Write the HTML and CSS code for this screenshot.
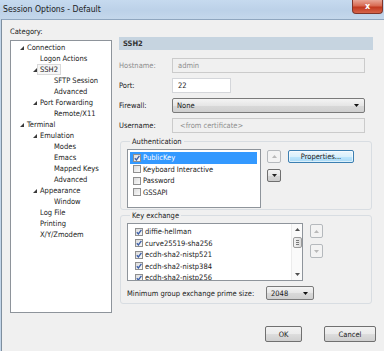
FILE: index.html
```html
<!DOCTYPE html>
<html lang="en">
<head>
    <meta charset="UTF-8">
    <title>Session Options - Default</title>
    <link rel="stylesheet" href="styles.css">
</head>
<body>
    <div class="window">
        <div class="titlebar">
            <span class="title">Session Options - Default</span>
            <span class="close">x</span>
        </div>

        <div class="client">
            <div class="main">
                <!-- Category tree -->
                <div class="category">
                    <div class="cat-label">Category:</div>
                    <ul class="tree">
                        <li class="node l0"><span class="tw"><svg width="4" height="4"><polygon points="0,4 4,4 4,0" /></svg></span><span class="txt">Connection</span></li>
                        <li class="node l1"><span class="tw"></span><span class="txt">Logon Actions</span></li>
                        <li class="node l1"><span class="tw"><svg width="4" height="4"><polygon points="0,4 4,4 4,0" /></svg></span><span class="txt selected">SSH2</span></li>
                        <li class="node l2"><span class="tw"></span><span class="txt">SFTP Session</span></li>
                        <li class="node l2"><span class="tw"></span><span class="txt">Advanced</span></li>
                        <li class="node l1"><span class="tw"><svg width="4" height="4"><polygon points="0,4 4,4 4,0" /></svg></span><span class="txt">Port Forwarding</span></li>
                        <li class="node l2"><span class="tw"></span><span class="txt">Remote/X11</span></li>
                        <li class="node l0"><span class="tw"><svg width="4" height="4"><polygon points="0,4 4,4 4,0" /></svg></span><span class="txt">Terminal</span></li>
                        <li class="node l1"><span class="tw"><svg width="4" height="4"><polygon points="0,4 4,4 4,0" /></svg></span><span class="txt">Emulation</span></li>
                        <li class="node l2"><span class="tw"></span><span class="txt">Modes</span></li>
                        <li class="node l2"><span class="tw"></span><span class="txt">Emacs</span></li>
                        <li class="node l2"><span class="tw"></span><span class="txt">Mapped Keys</span></li>
                        <li class="node l2"><span class="tw"></span><span class="txt">Advanced</span></li>
                        <li class="node l1"><span class="tw"><svg width="4" height="4"><polygon points="0,4 4,4 4,0" /></svg></span><span class="txt">Appearance</span></li>
                        <li class="node l2"><span class="tw"></span><span class="txt">Window</span></li>
                        <li class="node l1"><span class="tw"></span><span class="txt">Log File</span></li>
                        <li class="node l1"><span class="tw"></span><span class="txt">Printing</span></li>
                        <li class="node l1"><span class="tw"></span><span class="txt">X/Y/Zmodem</span></li>
                    </ul>
                </div>

                <!-- SSH2 page -->
                <div class="panel">
                    <div class="panel-head">SSH2</div>

                    <div class="form">
                        <div class="row disabled">
                            <span class="lbl">Hostname:</span>
                            <span class="field">admin</span>
                        </div>
                        <div class="row">
                            <span class="lbl">Port:</span>
                            <span class="field white short">22</span>
                        </div>
                        <div class="row">
                            <span class="lbl">Firewall:</span>
                            <span class="combo"><span class="val">None</span><svg width="5" height="3"><polygon points="0,0 5,0 2.5,3" /></svg></span>
                        </div>
                        <div class="row">
                            <span class="lbl">Username:</span>
                            <span class="field faded">&lt;from certificate&gt;</span>
                        </div>
                    </div>

                    <fieldset class="group">
                        <legend>Authentication</legend>
                        <div class="group-row">
                            <div class="list auth">
                                <div class="item sel"><span class="check"><svg width="6" height="6"><path d="M0.8 3.2 L2.4 5 L5.4 0.8" /></svg></span>PublicKey</div>
                                <div class="item"><span class="check"></span>Keyboard Interactive</div>
                                <div class="item"><span class="check"></span>Password</div>
                                <div class="item"><span class="check"></span>GSSAPI</div>
                            </div>
                            <div class="updown">
                                <span class="arrow-btn off"><svg width="5" height="3"><polygon points="0,3 5,3 2.5,0" /></svg></span>
                                <span class="arrow-btn"><svg width="5" height="3"><polygon points="0,0 5,0 2.5,3" /></svg></span>
                            </div>
                            <span class="btn focus props">Properties...</span>
                        </div>
                    </fieldset>

                    <fieldset class="group kex">
                        <legend>Key exchange</legend>
                        <div class="group-row">
                            <div class="list keys">
                                <div class="items">
                                    <div class="item"><span class="check"><svg width="6" height="6"><path d="M0.8 3.2 L2.4 5 L5.4 0.8" /></svg></span>diffie-hellman</div>
                                    <div class="item"><span class="check"><svg width="6" height="6"><path d="M0.8 3.2 L2.4 5 L5.4 0.8" /></svg></span>curve25519-sha256</div>
                                    <div class="item"><span class="check"><svg width="6" height="6"><path d="M0.8 3.2 L2.4 5 L5.4 0.8" /></svg></span>ecdh-sha2-nistp521</div>
                                    <div class="item"><span class="check"><svg width="6" height="6"><path d="M0.8 3.2 L2.4 5 L5.4 0.8" /></svg></span>ecdh-sha2-nistp384</div>
                                    <div class="item"><span class="check"><svg width="6" height="6"><path d="M0.8 3.2 L2.4 5 L5.4 0.8" /></svg></span>ecdh-sha2-nistp256</div>
                                </div>
                                <div class="vscroll">
                                    <span class="sb-arrow"><svg width="5" height="3"><polygon points="0,3 5,3 2.5,0" /></svg></span>
                                    <span class="thumb"><i></i><i></i><i></i></span>
                                    <span class="sb-fill"></span>
                                    <span class="sb-arrow"><svg width="5" height="3"><polygon points="0,0 5,0 2.5,3" /></svg></span>
                                </div>
                            </div>
                            <div class="updown">
                                <span class="arrow-btn off"><svg width="5" height="3"><polygon points="0,3 5,3 2.5,0" /></svg></span>
                                <span class="arrow-btn off"><svg width="5" height="3"><polygon points="0,0 5,0 2.5,3" /></svg></span>
                            </div>
                        </div>
                        <div class="prime-row">
                            <span class="prime-lbl">Minimum group exchange prime size:</span>
                            <span class="combo small"><span class="val">2048</span><svg width="5" height="3"><polygon points="0,0 5,0 2.5,3" /></svg></span>
                        </div>
                    </fieldset>
                </div>
            </div>

            <div class="footer">
                <span class="btn ok">OK</span>
                <span class="btn cancel">Cancel</span>
            </div>
        </div>
    </div>
</body>
</html>
```

FILE: styles.css
```css
:root {
    --face: #f0f0f0;
    --text: #1a1a1a;
    --muted: #8e8e8e;
    --select: #3399ff;
}

* {
    margin: 0;
    padding: 0;
    box-sizing: border-box;
}

body {
    width: 384px;
    height: 351px;
    overflow: hidden;
    background: #c2d5e9;
    color: var(--text);
    font-family: "DejaVu Sans Condensed", "DejaVu Sans", sans-serif;
    font-size: 7.5px;
}

.window {
    display: flex;
    flex-direction: column;
    height: 351px;
}

/* Aero title bar */
.titlebar {
    height: 19px;
    display: flex;
    justify-content: space-between;
    background: linear-gradient(to bottom, #c6daef, #bcd1e8 55%, #c4d7eb);
}

.title {
    padding-left: 3px;
    line-height: 19px;
    font-size: 8.6px;
    color: #1b1b1b;
}

.close {
    width: 31px;
    height: 14px;
    margin-right: 1px;
    border: 1px solid #80352a;
    border-top: none;
    border-radius: 0 0 4px 4px;
    background: linear-gradient(to bottom, #e8a595, #d86a52 45%, #c2391f 55%, #d5644a);
    color: #fff;
    font: bold 8px "DejaVu Sans", sans-serif;
    line-height: 13px;
    text-align: center;
}

.client {
    flex: 1;
    display: flex;
    flex-direction: column;
    margin-left: 1px;
    padding: 6px 8px 0 8px;
    background: var(--face);
    border-top: 1px solid #8fa6bf;
    border-left: 1px solid #7e8e9e;
}

.main {
    display: flex;
    gap: 7px;
}

/* Category tree */
.category {
    width: 102px;
}

.cat-label {
    line-height: 11px;
    margin-bottom: 3px;
}

.tree {
    height: 273px;
    list-style: none;
    padding-top: 1px;
    background: #fff;
    border: 1px solid #8e949b;
}

.node {
    display: flex;
    align-items: center;
    height: 11px;
}

.node.l0 { padding-left: 9px; }
.node.l1 { padding-left: 22px; }
.node.l2 { padding-left: 36px; }

.tw {
    width: 7px;
    display: flex;
    align-items: center;
}

.tw svg {
    fill: #3a3a3a;
}

.txt.selected {
    margin-left: -3px;
    padding: 0 2px;
    line-height: 9px;
    background: #f7f7f7;
    border: 1px solid #d9d9d9;
}

/* Right panel */
.panel {
    width: 254px;
    margin-top: 11px;
}

.panel-head {
    height: 13px;
    padding-left: 4px;
    line-height: 13px;
    font-weight: bold;
    color: #333;
    background: #c6d4e0;
}

.form {
    display: flex;
    flex-direction: column;
    gap: 5px;
    margin-top: 8px;
    padding-right: 8px;
}

.row {
    display: flex;
    align-items: center;
    height: 15px;
}

.lbl {
    width: 53px;
}

.row.disabled .lbl {
    color: var(--muted);
}

.field {
    flex: 1;
    height: 15px;
    padding-left: 5px;
    line-height: 13px;
    color: var(--muted);
    background: var(--face);
    border: 1px solid #cbcbcb;
}

.field.white {
    flex: none;
    width: 59px;
    color: var(--text);
    background: #fff;
    border-color: #d4d6da;
}

.field.faded {
    padding-left: 7px;
}

.combo {
    flex: 1;
    height: 15px;
    display: flex;
    align-items: center;
    padding: 0 5px 0 4px;
    border: 1px solid #7a7a7a;
    border-radius: 2px;
    background: linear-gradient(to bottom, #f4f4f4, #e6e6e6 50%, #d9d9d9 51%, #d0d0d0);
}

.combo .val {
    flex: 1;
}

.combo svg {
    fill: #111;
}

.combo.small {
    flex: none;
    width: 48px;
    height: 14px;
}

/* Group boxes */
.group {
    margin: 3px 1px 0 1px;
    padding: 2px 6px 1px 6px;
    border: 1px solid #d8dde2;
    border-radius: 3px;
}

.group legend {
    margin-left: 3px;
    padding: 0 2px;
    line-height: 11px;
}

.group.kex {
    margin-top: 0;
    padding-bottom: 3px;
}

.group-row {
    display: flex;
    align-items: flex-start;
}

.list {
    background: #fff;
    border: 1px solid #8e949b;
}

.list.auth {
    width: 134px;
    height: 59px;
    padding: 2px 3px 0 2px;
}

.item {
    display: flex;
    align-items: center;
    height: 11.5px;
    padding-left: 3px;
    white-space: nowrap;
}

.item.sel {
    background: var(--select);
    color: #fff;
}

.check {
    width: 8px;
    height: 8px;
    margin-right: 2px;
    display: flex;
    align-items: center;
    justify-content: center;
    border: 1px solid #8f8f8f;
    background: linear-gradient(to bottom right, #dcdcdc, #fafafa);
}

.check svg {
    fill: none;
    stroke: #3b5ea8;
    stroke-width: 1.3;
}

.updown {
    display: flex;
    flex-direction: column;
    gap: 6px;
    margin: 1px 0 0 6px;
}

.arrow-btn {
    width: 14px;
    height: 13px;
    display: flex;
    align-items: center;
    justify-content: center;
    border: 1px solid #6f6f6f;
    border-radius: 2px;
    background: linear-gradient(to bottom, #f3f3f3, #e5e5e5 50%, #d6d6d6 51%, #cdcdcd);
}

.arrow-btn svg {
    fill: #222;
}

.arrow-btn.off {
    border-color: #b5b9bd;
    background: #f3f3f3;
}

.arrow-btn.off svg {
    fill: #b9b9b9;
}

.btn {
    height: 13px;
    display: flex;
    align-items: center;
    justify-content: center;
    border: 1px solid #707070;
    border-radius: 2px;
    background: linear-gradient(to bottom, #f2f2f2, #ebebeb 50%, #dddddd 51%, #cfcfcf);
}

.btn.focus {
    border-color: #3c7fb1;
    background: linear-gradient(to bottom, #eaf6fd, #d9f0fc 50%, #bee6fd 51%, #a7d9f5);
    box-shadow: inset 0 0 0 1px rgba(255, 255, 255, 0.6);
}

.props {
    width: 66px;
    margin: 1px 0 0 7px;
}

.list.keys {
    width: 176px;
    height: 58px;
    display: flex;
}

.items {
    flex: 1;
    padding: 2px 0 0 4px;
    overflow: hidden;
}

.vscroll {
    width: 11px;
    display: flex;
    flex-direction: column;
    align-items: center;
    background: #fafafa;
    border-left: 1px solid #ececec;
}

.sb-arrow {
    height: 11px;
    display: flex;
    align-items: center;
}

.sb-arrow svg {
    fill: #505050;
}

.sb-fill {
    flex: 1;
}

.thumb {
    width: 9px;
    height: 11px;
    margin-top: 2px;
    display: flex;
    flex-direction: column;
    justify-content: center;
    gap: 1px;
    padding: 0 2px;
    border: 1px solid #9b9b9b;
    border-radius: 2px;
    background: linear-gradient(to right, #f3f3f3, #dcdcdc);
}

.thumb i {
    height: 1px;
    background: #7a7a7a;
}

.kex .updown {
    margin-left: 7px;
    gap: 6px;
}

.kex .arrow-btn {
    width: 13px;
    height: 14px;
}

.prime-row {
    display: flex;
    align-items: center;
    margin-top: 5px;
}

.prime-lbl {
    width: 139px;
}

/* Dialog buttons */
.footer {
    display: flex;
    justify-content: flex-end;
    gap: 22px;
    margin-top: 13px;
}

.footer .btn {
    height: 16px;
}

.ok {
    width: 37px;
}

.cancel {
    width: 52px;
}
```
